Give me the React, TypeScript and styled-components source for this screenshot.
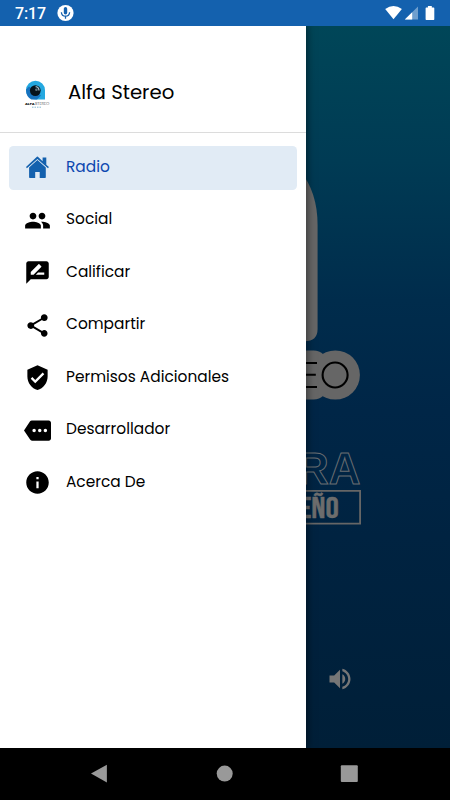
import React from "react";
import styled, { createGlobalStyle } from "styled-components";
import {
  MdPeople,
  MdRateReview,
  MdShare,
  MdVerifiedUser,
  MdMore,
  MdInfo,
  MdVolumeUp,
} from "react-icons/md";

const GlobalStyle = createGlobalStyle`
  *, *::before, *::after { box-sizing: border-box; }
  body { margin: 0; background: #000; }
  svg { display: block; }
`;

const Phone = styled.div`
  width: 450px;
  height: 800px;
  display: flex;
  flex-direction: column;
  overflow: hidden;
  font-family: Poppins, Inter, "Open Sans", sans-serif;
`;

const StatusBar = styled.header`
  flex: none;
  height: 26px;
  display: flex;
  align-items: center;
  padding: 0 15px;
  background: #1461ae;
  color: #fff;
`;

const Clock = styled.time`
  width: 42px;
  font: 500 16px/26px Roboto, sans-serif;
  letter-spacing: -0.1px;
  padding-top: 1px;
`;

const StatusIcons = styled.svg`
  margin-left: auto;
`;

const Body = styled.main`
  flex: none;
  height: 722px;
  display: flex;
  overflow: hidden;
  background: linear-gradient(
    #004658 0,
    #003b54 135px,
    #002c4c 275px,
    #002647 385px,
    #002341 510px,
    #001f38 722px
  );
`;

const Drawer = styled.nav`
  flex: 0 0 306.4px;
  height: 721.5px;
  background: #fff;
  box-shadow: 0 0 8px 1px rgba(0, 0, 0, 0.5);
  z-index: 1;
`;

const DrawerHeader = styled.div`
  height: 107px;
  display: flex;
  align-items: flex-start;
  padding: 53px 0 0 24px;
  border-bottom: 1px solid #dcdcdc;
`;

const Title = styled.h1`
  margin: -1px 0 0 18px;
  font-size: 19.7px;
  line-height: 28px;
  font-weight: 400;
  color: #000;
`;

const Menu = styled.ul`
  list-style: none;
  margin: 0;
  padding: 13px 9px 0;
  display: flex;
  flex-direction: column;
  gap: 9px;
`;

const MenuItem = styled.li<{ $active?: boolean }>`
  height: 43.5px;
  display: flex;
  align-items: center;
  padding-left: 15px;
  gap: 15px;
  border-radius: 4.5px;
  background: ${(p) => (p.$active ? "#e1ebf5" : "transparent")};
  color: ${(p) => (p.$active ? "#0c47b0" : "#000")};
`;

const IconSlot = styled.span`
  width: 27px;
  height: 27px;
  display: flex;
  color: #000;
`;

const Label = styled.span`
  font-size: 15.4px;
  font-weight: 400;
  line-height: 22px;
  padding-bottom: 2px;
  white-space: nowrap;
`;

const Player = styled.section`
  flex: 1;
  display: flex;
  flex-direction: column;
`;

const StationArt = styled.svg`
  flex: 0 0 614px;
  overflow: visible;
`;

const Controls = styled.div`
  padding: 24.5px 0 0 20px;
  height: 60px;
  color: #767676;
`;

const NavBar = styled.footer`
  flex: none;
  height: 52px;
  background: #000;
`;

const HomeIcon = () => (
  <svg width="27" height="27" viewBox="0 0 27 27" fill="#1461ae">
    <path d="M2 13.1 12.9 2.8Q13.4 2.4 13.9 2.8L18.6 7.2V3.4H22.3V10.7L24.9 13.1 24 14.3 13.4 4.9 2.9 14.3Z" />
    <path d="M5.1 13.6 13.4 6.1 21.8 13.6V23.3Q21.8 24 21.1 24H15.7V17.9H11.2V24H5.8Q5.1 24 5.1 23.3Z" />
  </svg>
);

const StationLogo = () => (
  <svg width="26" height="30" viewBox="0 0 26 30">
    <path d="M2 11.2A9.5 9.5 0 0 1 21 11.2V20.6H11.5A9.5 9.5 0 0 1 2 11.2Z" fill="#24a8e0" />
    <path d="M2 10.5Q1.9 17.5 7.4 20.6H13L17 16.5 5 7.5Z" fill="#1672be" />
    <circle cx="11.3" cy="11.6" r="5.4" fill="#06131c" />
    <path d="M11.6 7.6Q15 8 15 11.6" fill="none" stroke="#a5c0cc" strokeWidth="1.3" />
    <circle cx="12.4" cy="10.8" r="1.3" fill="#5d7480" />
    <text x="1" y="26.2" fontSize="4.1" fontWeight="800" textLength="9.7" lengthAdjust="spacingAndGlyphs" fill="#111">ALFA</text>
    <text x="10.9" y="26.2" fontSize="4.1" fontWeight="300" textLength="14.5" lengthAdjust="spacingAndGlyphs" fill="#444">STEREO</text>
    <path d="M8 28.2H18" stroke="#66a7c8" strokeWidth="0.8" strokeDasharray="1.5 1" />
  </svg>
);

const items = [
  { label: "Radio", icon: <HomeIcon />, active: true },
  { label: "Social", icon: <MdPeople size={27} /> },
  { label: "Calificar", icon: <MdRateReview size={27} /> },
  { label: "Compartir", icon: <MdShare size={27} /> },
  { label: "Permisos Adicionales", icon: <MdVerifiedUser size={27} /> },
  { label: "Desarrollador", icon: <MdMore size={27} /> },
  { label: "Acerca De", icon: <MdInfo size={27} /> },
];

export default function App() {
  return (
    <Phone>
      <GlobalStyle />
      <StatusBar>
        <Clock>7:17</Clock>
        <svg width="17" height="18" viewBox="0 0 17 18">
          <circle cx="8.5" cy="9" r="8.1" fill="#fff" />
          <rect x="6.8" y="3" width="3.4" height="7.5" rx="1.7" fill="#1461ae" />
          <path d="M4.4 8.2Q4.6 12.2 8.5 12.2T12.6 8.2M8.5 12.2V14.8" fill="none" stroke="#1461ae" strokeWidth="1.3" />
        </svg>
        <StatusIcons width="50" height="26" viewBox="385 0 50 26">
          <path d="M385.2 9Q393.5 3 401.9 9L393.5 19.2Z" fill="#fff" />
          <path d="M418 6.5V19.6H404.8Z" fill="#6f9fce" />
          <path d="M412.2 12.3V19.6H404.8Z" fill="#fff" />
          <path d="M427.9 6H431.8V7.5H433.6Q434.3 7.5 434.3 8.2V19.3Q434.3 20 433.6 20H426.3Q425.6 20 425.6 19.3V8.2Q425.6 7.5 426.3 7.5H427.9Z" fill="#fff" />
        </StatusIcons>
      </StatusBar>
      <Body>
        <Drawer>
          <DrawerHeader>
            <StationLogo />
            <Title>Alfa Stereo</Title>
          </DrawerHeader>
          <Menu>
            {items.map((item) => (
              <MenuItem key={item.label} $active={item.active}>
                <IconSlot>{item.icon}</IconSlot>
                <Label>{item.label}</Label>
              </MenuItem>
            ))}
          </Menu>
        </Drawer>
        <Player>
          <StationArt width="143.6" height="614" viewBox="306.4 26 143.6 614">
            <path d="M300 170Q318 192 318 225V329Q318 341.3 305 341.3H300Z" fill="#666" />
            <rect x="280" y="350.5" width="48" height="49" rx="14" fill="#666" />
            <circle cx="335.7" cy="375" r="24.6" fill="#666" />
            <path d="M300 363H317.4M300 374.8H316.2M300 387H317.4" stroke="#000" strokeWidth="2" />
            <circle cx="335.5" cy="375" r="12.5" fill="none" stroke="#000" strokeWidth="2.1" />
            <text x="297.5" y="484" fontFamily="Liberation Sans, Arial, sans-serif" fontWeight="700" fontSize="45" textLength="63.5" lengthAdjust="spacingAndGlyphs" fill="none" stroke="#6a6e72" strokeWidth="1">RA</text>
            <path d="M300 490.8H360.5V523.6H300" fill="none" stroke="#666" strokeWidth="1.8" />
            <text x="299.7" y="518" fontFamily="Bebas Neue, Liberation Sans, Arial, sans-serif" fontWeight="400" fontSize="29" textLength="39.5" lengthAdjust="spacingAndGlyphs" fill="#6d6d6d" stroke="#6d6d6d" strokeWidth="0.4">EÑO</text>
          </StationArt>
          <Controls>
            <MdVolumeUp size={28} />
          </Controls>
        </Player>
      </Body>
      <NavBar>
        <svg width="450" height="52" viewBox="0 748 450 52" fill="#999">
          <path d="M91 773.6 106.9 764.8V782.6Z" />
          <circle cx="224.7" cy="773.6" r="8" />
          <rect x="340.8" y="765.2" width="17" height="16.8" rx="1" />
        </svg>
      </NavBar>
    </Phone>
  );
}
